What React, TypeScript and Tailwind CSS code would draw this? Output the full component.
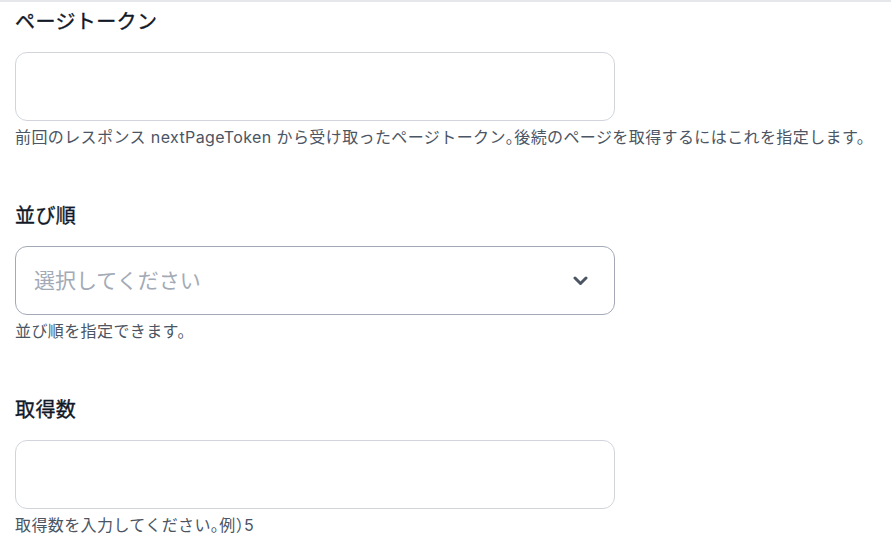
import React from "react";

// half-width punctuation like the reference renders it
function Half({ children }: { children: React.ReactNode }) {
  return <span className="[font-feature-settings:'halt']">{children}</span>;
}

function Field({
  label,
  help,
  children,
}: {
  label: string;
  help: React.ReactNode;
  children: React.ReactNode;
}) {
  return (
    <div className="flex flex-col">
      <label className="text-[20px] leading-[28px] font-normal text-[#111827] [-webkit-text-stroke:0.35px_#111827]">
        {label}
      </label>
      <div className="mt-4">{children}</div>
      <p className="mt-1.5 text-[16px] leading-[20px] text-[#4b5563]">{help}</p>
    </div>
  );
}

export default function App() {
  return (
    <div className="min-h-screen bg-white border-t-2 border-[#e5e7eb] pt-[6px] pl-[15px] tracking-wide font-['Inter','Noto_Sans_CJK_JP',sans-serif]">
      <div className="flex flex-col gap-[55px]">
        <Field
          label="ページトークン"
          help={
            <>
              前回のレスポンス nextPageToken から受け取ったページトークン
              <Half>。</Half>
              後続のページを取得するにはこれを指定します。
            </>
          }
        >
          <input
            type="text"
            className="block w-[600px] h-[69px] rounded-xl border border-[#d1d5db] px-4 text-[20px] outline-none"
          />
        </Field>

        <Field label="並び順" help="並び順を指定できます。">
          <div className="flex w-[600px] h-[69px] items-center justify-between rounded-xl border border-[#a3aab6] pl-[18px] pr-[26px]">
            <span className="text-[21px] tracking-normal text-[#a3aab6]">選択してください</span>
            <svg width="15" height="10" viewBox="0 0 15 10" fill="none">
              <path
                d="M2 2 L7.5 7.5 L13 2"
                stroke="#4b5563"
                strokeWidth="3"
                strokeLinecap="round"
                strokeLinejoin="round"
              />
            </svg>
          </div>
        </Field>

        <Field
          label="取得数"
          help={
            <>
              取得数を入力してください<Half>。</Half>例<Half>）</Half>5
            </>
          }
        >
          <input
            type="text"
            className="block w-[600px] h-[69px] rounded-xl border border-[#d1d5db] px-4 text-[20px] outline-none"
          />
        </Field>
      </div>
    </div>
  );
}
